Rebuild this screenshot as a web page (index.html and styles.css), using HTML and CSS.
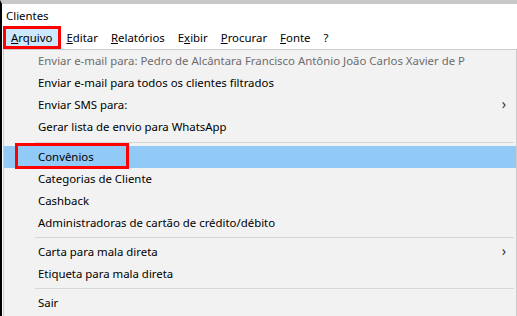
FILE: index.html
```html
<!DOCTYPE html>
<html lang="pt-BR">
<head>
    <meta charset="UTF-8">
    <title>Clientes</title>
    <link rel="stylesheet" href="styles.css">
</head>
<body>
    <div class="window">
        <div class="title">Clientes</div>
        <div class="menubar">
            <span class="menu-item active"><u>A</u>rquivo</span>
            <span class="menu-item"><u>E</u>ditar</span>
            <span class="menu-item"><u>R</u>elatórios</span>
            <span class="menu-item">E<u>x</u>ibir</span>
            <span class="menu-item"><u>P</u>rocurar</span>
            <span class="menu-item"><u>F</u>onte</span>
            <span class="menu-item">?</span>
        </div>
        <div class="dropdown">
            <div class="row disabled">Enviar e-mail para: Pedro de Alcântara Francisco Antônio João Carlos Xavier de P</div>
            <div class="row">Enviar e-mail para todos os clientes filtrados</div>
            <div class="row">Enviar SMS para:<span class="arrow">&#8250;</span></div>
            <div class="row">Gerar lista de envio para WhatsApp</div>
            <div class="sep first"></div>
            <div class="row selected"><span class="mark"></span>Convênios</div>
            <div class="row">Categorias de Cliente</div>
            <div class="row">Cashback</div>
            <div class="row">Administradoras de cartão de crédito/débito</div>
            <div class="sep"></div>
            <div class="row">Carta para mala direta<span class="arrow">&#8250;</span></div>
            <div class="row">Etiqueta para mala direta</div>
            <div class="sep"></div>
            <div class="row">Sair</div>
        </div>
    </div>
</body>
</html>
```

FILE: styles.css
```css
body {
    margin: 0;
    background-color: #f0f0f0;
    font-family: 'Noto Sans', 'Open Sans', sans-serif;
    font-size: 11.4px;
    color: #000;
    overflow: hidden;
}
.window {
    border-top: 4px solid #c8c8c8;
    border-left: 2px solid #000;
    height: 312px;
    background-color: #fff;
}
.title {
    height: 22px;
    line-height: 24px;
    padding-left: 4px;
}
.menubar {
    display: flex;
    height: 23px;
    align-items: center;
    padding-left: 2px;
}
.menu-item {
    padding: 0 6px;
    line-height: 19px;
    margin-right: 1px;
}
.menu-item.active {
    background-color: #cce8ff;
    outline: 3px solid #ff0000;
    outline-offset: -1px;
    padding: 0 7px 0 6px;
    margin-left: 1px;
}
.dropdown {
    margin-left: 1px;
    width: 512px;
    height: 270px;
    border: 1px solid #cccccc;
    border-bottom: none;
    background-color: #f2f2f2;
}
.row {
    position: relative;
    height: 22px;
    line-height: 21px;
    padding-left: 34px;
    white-space: nowrap;
}
.row.disabled {
    color: #6d6d6d;
}
.row.selected {
    background-color: #91c9f7;
}
.mark {
    position: absolute;
    left: 11px;
    top: -3px;
    width: 108px;
    height: 20px;
    border: 3px solid #ff0000;
}
.arrow {
    position: absolute;
    right: 10px;
    top: -1px;
    color: #333;
    font-size: 14px;
}
.sep {
    height: 1px;
    margin: 3px 2px 3px 31px;
    background-color: #d7d7d7;
}
.sep.first {
    margin: 4px 2px 3px 31px;
}
```
